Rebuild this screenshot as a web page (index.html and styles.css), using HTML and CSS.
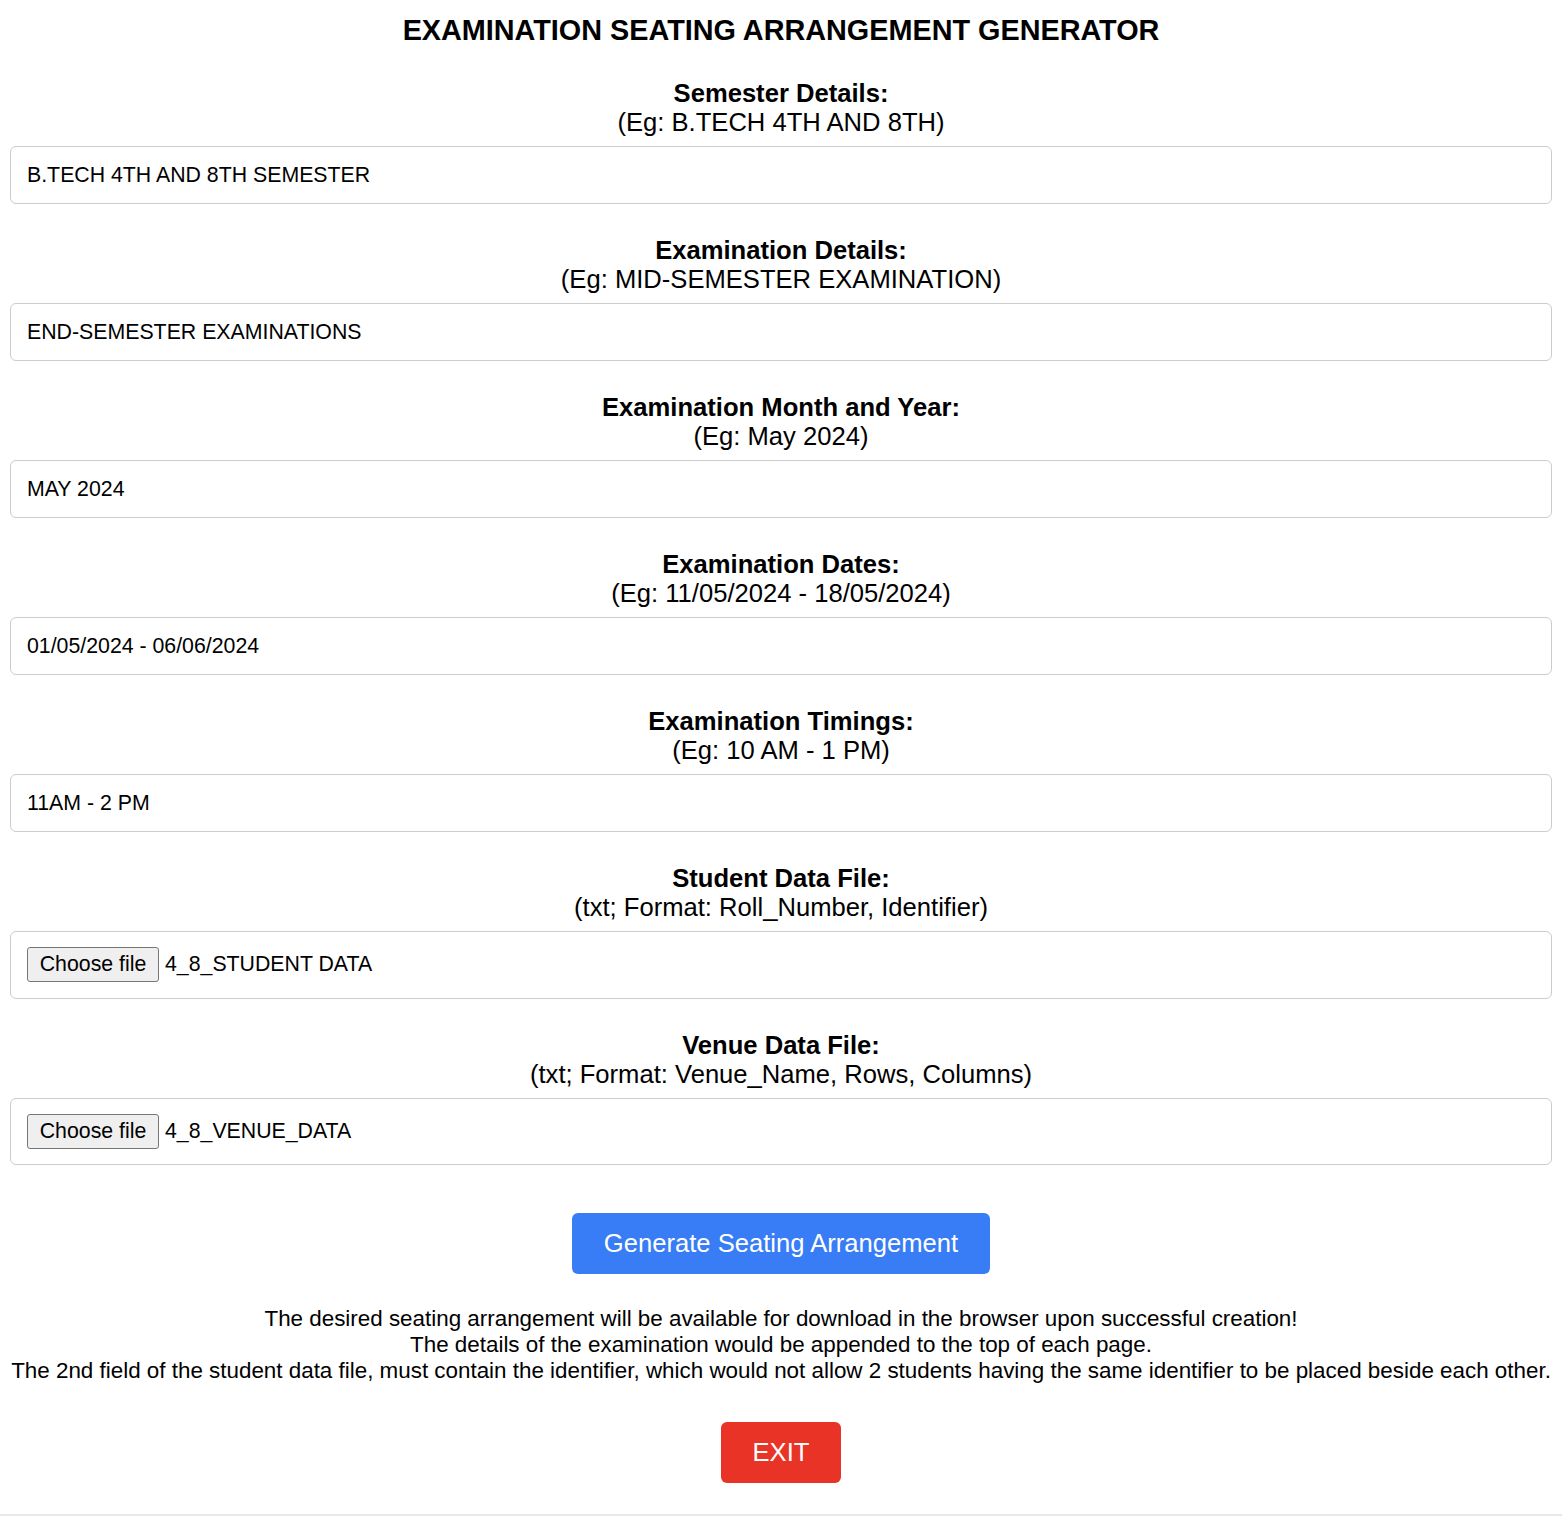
FILE: index.html
```html
<!DOCTYPE html>
<html lang="en">
<head>
<meta charset="utf-8">
<title>Examination Seating Arrangement Generator</title>
<link rel="stylesheet" href="styles.css">
</head>
<body>
<main class="page">
  <h1 class="title">EXAMINATION SEATING ARRANGEMENT GENERATOR</h1>
  <form class="form">
    <div class="field">
      <label class="label"><b>Semester Details:</b><span>(Eg: B.TECH 4TH AND 8TH)</span></label>
      <div class="box">B.TECH 4TH AND 8TH SEMESTER</div>
    </div>
    <div class="field">
      <label class="label"><b>Examination Details:</b><span>(Eg: MID-SEMESTER EXAMINATION)</span></label>
      <div class="box">END-SEMESTER EXAMINATIONS</div>
    </div>
    <div class="field">
      <label class="label"><b>Examination Month and Year:</b><span>(Eg: May 2024)</span></label>
      <div class="box">MAY 2024</div>
    </div>
    <div class="field">
      <label class="label"><b>Examination Dates:</b><span>(Eg: 11/05/2024 - 18/05/2024)</span></label>
      <div class="box">01/05/2024 - 06/06/2024</div>
    </div>
    <div class="field">
      <label class="label"><b>Examination Timings:</b><span>(Eg: 10 AM - 1 PM)</span></label>
      <div class="box">11AM - 2 PM</div>
    </div>
    <div class="field">
      <label class="label"><b>Student Data File:</b><span>(txt; Format: Roll_Number, Identifier)</span></label>
      <div class="box file"><span class="choose">Choose file</span><span class="fname">4_8_STUDENT DATA</span></div>
    </div>
    <div class="field">
      <label class="label"><b>Venue Data File:</b><span>(txt; Format: Venue_Name, Rows, Columns)</span></label>
      <div class="box file"><span class="choose">Choose file</span><span class="fname">4_8_VENUE_DATA</span></div>
    </div>
    <div class="actions">
      <button type="button" class="btn btn-primary">Generate Seating Arrangement</button>
    </div>
  </form>
  <p class="note">The desired seating arrangement will be available for download in the browser upon successful creation!<br>The details of the examination would be appended to the top of each page.<br>The 2nd field of the student data file, must contain the identifier, which would not allow 2 students having the same identifier to be placed beside each other.</p>
  <div class="actions">
    <button type="button" class="btn btn-exit">EXIT</button>
  </div>
</main>
<div class="rule"></div>
</body>
</html>
```
FILE: styles.css
```css
* { box-sizing: border-box; }
html, body { margin: 0; padding: 0; background: #fff; }
body {
  font-family: "Liberation Sans", Arial, sans-serif;
  color: #000;
  width: 1562px;
  height: 1516px;
  display: flex;
  flex-direction: column;
}
.page {
  flex: 1;
  padding: 0 10px;
}
.title {
  margin: 0;
  padding-top: 13px;
  font-size: 28.8px;
  line-height: 34px;
  font-weight: bold;
  text-align: center;
}
.form {
  display: flex;
  flex-direction: column;
}
.field {
  display: flex;
  flex-direction: column;
  margin-top: 32px;
}
.label {
  display: flex;
  flex-direction: column;
  align-items: center;
  font-size: 25.6px;
  line-height: 29px;
  text-align: center;
}
.label b { font-weight: bold; }
.box {
  margin-top: 9px;
  height: 58px;
  border: 1px solid #ccc;
  border-radius: 6px;
  padding: 0 16px;
  display: flex;
  align-items: center;
  font-size: 21.3px;
}
.box.file { height: 67.5px; }
.choose {
  display: inline-flex;
  align-items: center;
  justify-content: center;
  width: 132px;
  height: 35px;
  background: #efefef;
  border: 1px solid #767676;
  border-radius: 3px;
  font-size: 21.3px;
  margin-right: 6px;
}
.actions {
  display: flex;
  justify-content: center;
}
.form .actions { margin-top: 48px; }
.btn {
  font-family: "Liberation Sans", Arial, sans-serif;
  border: none;
  border-radius: 6px;
  color: #fff;
  font-size: 25.6px;
  height: 61px;
  cursor: pointer;
}
.btn-primary {
  background: #387cf6;
  width: 418px;
}
.btn-exit {
  background: #e83326;
  width: 120px;
}
.note {
  margin: 32px 0 38px;
  font-size: 22.4px;
  line-height: 26px;
  text-align: center;
}
.rule {
  height: 2px;
  background: #e8e8e8;
}
```
